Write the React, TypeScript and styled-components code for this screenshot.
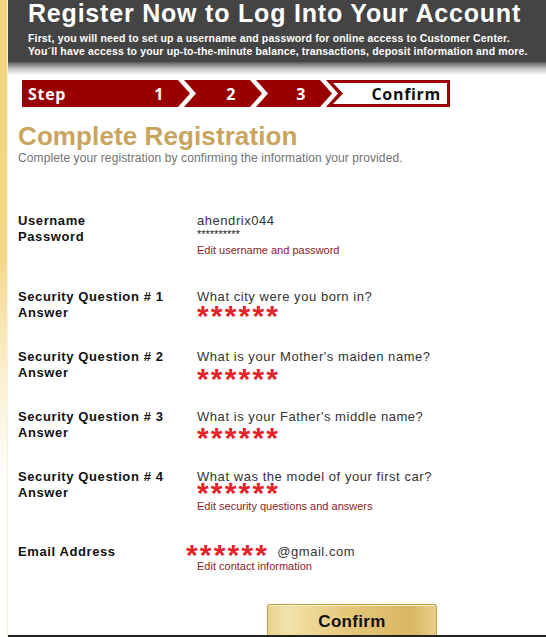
import React from 'react';
import styled, { createGlobalStyle } from 'styled-components';

const GlobalStyle = createGlobalStyle`
  html, body {
    margin: 0;
    padding: 0;
    background: #fff;
    font-family: "Liberation Sans", Arial, sans-serif;
  }
`

const Page = styled.div`
  display: flex;
  width: 546px;
  height: 637px;
  overflow: hidden;
  background: #fff;
`

const GoldStrip = styled.div`
  width: 7px;
  flex-shrink: 0;
  background: linear-gradient(#f2d47a 0, #f3d88a 40%, #fbf0d2 60%, #fff 75%);
  border-right: 1px solid #faf1d8;
`

const Main = styled.div`
  flex: 1;
  display: flex;
  flex-direction: column;
  min-width: 0;
`

const Header = styled.div`
  height: 62px;
  box-sizing: border-box;
  padding: 1px 0 0 20px;
  background: #444;
  color: #fff;
`

const HeaderTitle = styled.h1`
  margin: 0 0 6px;
  font-size: 25px;
  line-height: 25px;
  font-weight: bold;
  letter-spacing: 0.8px;
  white-space: nowrap;
`

const HeaderText = styled.p`
  margin: 0;
  font-size: 10.5px;
  line-height: 13px;
  font-weight: bold;
  letter-spacing: 0.15px;
  white-space: nowrap;
`

const Shade = styled.div`
  height: 14px;
  background: linear-gradient(#5a5a5a, #bdbdbd 45%, #f4f4f4 85%, #fff);
`

const Content = styled.div`
  flex: 1;
  padding-left: 10px;
  display: flex;
  flex-direction: column;
`

const StepBar = styled.div`
  display: flex;
  height: 27px;
  margin: 4px 0 0 4px;
  font-family: "Open Sans", "Liberation Sans", sans-serif;
  font-weight: bold;
  font-size: 16px;
  letter-spacing: 0.7px;
`

const Step = styled.div<{ $w: number; $first?: boolean }>`
  width: ${p => p.$w}px;
  margin-left: ${p => (p.$first ? 0 : -6)}px;
  display: flex;
  align-items: center;
  justify-content: ${p => (p.$first ? 'space-between' : 'flex-end')};
  box-sizing: border-box;
  padding: 0 26px 0 6px;
  background: #990000;
  color: #fff;
  clip-path: ${p => p.$first
    ? 'polygon(0 0, calc(100% - 12px) 0, 100% 50%, calc(100% - 12px) 100%, 0 100%)'
    : 'polygon(0 0, calc(100% - 12px) 0, 100% 50%, calc(100% - 12px) 100%, 0 100%, 12px 50%)'};
`

const StepLast = styled.div`
  width: 124px;
  margin-left: -6px;
  box-sizing: border-box;
  padding: 3px 3px 3px 0;
  background: #990000;
  clip-path: polygon(0 0, 100% 0, 100% 100%, 0 100%, 12px 50%);
  display: flex;
`

const StepLastInner = styled.div`
  flex: 1;
  margin-left: 7px;
  display: flex;
  align-items: center;
  justify-content: flex-end;
  padding-right: 6px;
  background: #fff;
  color: #111;
  clip-path: polygon(0 0, 100% 0, 100% 100%, 0 100%, 10px 50%);
`

const Title = styled.h2`
  margin: 14px 0 0;
  font-size: 26px;
  line-height: 30px;
  font-weight: bold;
  color: #c9a560;
  letter-spacing: 0.1px;
`

const Subtitle = styled.p`
  margin: 0;
  font-size: 12px;
  line-height: 14px;
  color: #727272;
  letter-spacing: 0.1px;
`

const Section = styled.div<{ $top?: number; $height?: number; $valueX?: number }>`
  display: grid;
  grid-template-columns: ${p => 179 - (p.$valueX || 0)}px 1fr;
  margin-top: ${p => p.$top || 0}px;
  min-height: ${p => p.$height || 0}px;
  align-content: start;
`

const Labels = styled.div`
  display: flex;
  flex-direction: column;
`

const Label = styled.div`
  font-size: 13px;
  line-height: 16px;
  font-weight: bold;
  color: #111;
  letter-spacing: 0.6px;
  white-space: nowrap;
`

const Values = styled.div`
  display: flex;
  flex-direction: column;
  align-items: flex-start;
`

const Value = styled.div`
  font-size: 13px;
  line-height: 16px;
  color: #333;
  letter-spacing: 0.55px;
  white-space: nowrap;
  display: flex;
  align-items: center;
`

const Hidden = styled.div`
  font-size: 11px;
  line-height: 11px;
  color: #222;
`

const Stars = styled.span<{ $shift?: number }>`
  display: block;
  height: 12px;
  margin-top: ${p => p.$shift || 0}px;
  font-size: 30px;
  line-height: 12px;
  font-weight: bold;
  color: #e3242b;
  letter-spacing: 2.2px;
  position: relative;
  top: 5px;
`

const InlineStars = styled(Stars)`
  display: inline-block;
  margin-right: 8px;
  top: 3px;
`

const EditLink = styled.a<{ $top?: number; $indent?: number }>`
  display: block;
  margin-top: ${p => p.$top || 0}px;
  margin-left: ${p => p.$indent || 0}px;
  font-size: 11px;
  line-height: 13px;
  color: #8a1b1f;
  text-decoration: none;
  white-space: nowrap;
`

const ButtonRow = styled.div`
  margin-top: auto;
  padding-left: 249px;
  display: flex;
`

const ConfirmButton = styled.button`
  width: 170px;
  height: 31px;
  padding: 3px 0 0;
  border: 1px solid #c59d48;
  border-bottom: none;
  border-radius: 3px 3px 0 0;
  background: linear-gradient(90deg, #e9d28e 0%, #f3e2aa 12%, #e6c97c 45%, #d9b564 85%, #e8cf8a 100%);
  box-shadow: inset 0 1px 0 #fbf0c8;
  font-family: "Liberation Sans", Arial, sans-serif;
  font-size: 17px;
  font-weight: bold;
  color: #111;
  letter-spacing: 0.3px;
  cursor: pointer;
`

const FooterLine = styled.div`
  height: 2px;
  background: #222;
`

const questions = [
  { n: 1, q: 'What city were you born in?', shift: 0 },
  { n: 2, q: "What is your Mother's maiden name?", shift: 3 },
  { n: 3, q: "What is your Father's middle name?", shift: 2 },
  { n: 4, q: 'What was the model of your first car?', shift: -3 },
];

function App() {
  return (
    <Page>
      <GlobalStyle />
      <GoldStrip />
      <Main>
        <Header>
          <HeaderTitle>Register Now to Log Into Your Account</HeaderTitle>
          <HeaderText>First, you will need to set up a username and password for online access to Customer Center.</HeaderText>
          <HeaderText>You´ll have access to your up-to-the-minute balance, transactions, deposit information and more.</HeaderText>
        </Header>
        <Shade />
        <Content>
          <StepBar>
            <Step $w={168} $first><span>Step</span><span>1</span></Step>
            <Step $w={78}><span>2</span></Step>
            <Step $w={76}><span>3</span></Step>
            <StepLast><StepLastInner>Confirm</StepLastInner></StepLast>
          </StepBar>

          <Title>Complete Registration</Title>
          <Subtitle>Complete your registration by confirming the information your provided.</Subtitle>

          <Section $top={48}>
            <Labels>
              <Label>Username</Label>
              <Label>Password</Label>
            </Labels>
            <Values>
              <Value>ahendrix044</Value>
              <Hidden>**********</Hidden>
              <EditLink href="#" $top={4}>Edit username and password</EditLink>
            </Values>
          </Section>

          {questions.map((item, i) => (
            <Section key={item.n} $top={i === 0 ? 32 : 0} $height={60}>
              <Labels>
                <Label>Security Question # {item.n}</Label>
                <Label>Answer</Label>
              </Labels>
              <Values>
                <Value>{item.q}</Value>
                <Stars $shift={item.shift}>******</Stars>
                {item.n === 4 && <EditLink href="#" $top={6}>Edit security questions and answers</EditLink>}
              </Values>
            </Section>
          ))}

          <Section $top={15} $valueX={11}>
            <Labels>
              <Label>Email Address</Label>
            </Labels>
            <Values>
              <Value><InlineStars>******</InlineStars>@gmail.com</Value>
              <EditLink href="#" $indent={11}>Edit contact information</EditLink>
            </Values>
          </Section>

          <ButtonRow>
            <ConfirmButton>Confirm</ConfirmButton>
          </ButtonRow>
        </Content>
        <FooterLine />
      </Main>
    </Page>
  );
}

export default App;
